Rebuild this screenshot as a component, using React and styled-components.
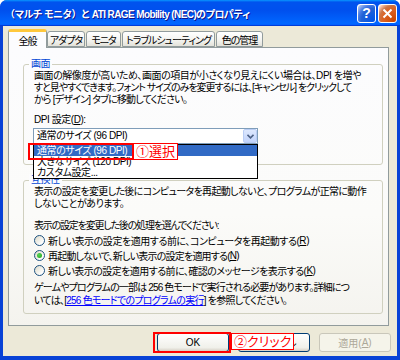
import React from "react";
import styled, { createGlobalStyle } from "styled-components";

const GlobalStyle = createGlobalStyle`
  html, body {
    margin: 0;
    padding: 0;
    background: #fff;
  }
  body {
    font-family: "Liberation Sans", "Noto Sans CJK JP", sans-serif;
    font-size: 10px;
    font-feature-settings: "palt";
  }
`;

const Frame = styled.div`
  width: 400px;
  height: 360px;
  box-sizing: border-box;
  background: #0842d6;
  border-radius: 7px 7px 0 0;
  display: flex;
  flex-direction: column;
  overflow: hidden;
`;

const TitleBar = styled.div`
  height: 26px;
  flex: none;
  display: flex;
  align-items: center;
  padding: 0 3px 0 5px;
  background: linear-gradient(
    180deg,
    #0997ff,
    #0053ee 8%,
    #0050ee 40%,
    #06f 88%,
    #06f 93%,
    #005bff 95%,
    #003dd7 96%,
    #003dd7
  );
  .title {
    flex: 1;
    color: #fff;
    font-weight: bold;
    font-size: 10px;
    font-feature-settings: normal;
    letter-spacing: -0.6px;
    white-space: nowrap;
    text-shadow: 1px 1px #0f1089;
  }
  .jp {
    letter-spacing: -0.8px;
  }
`;

const CaptionButton = styled.div`
  width: 19px;
  height: 19px;
  margin-left: 2px;
  box-sizing: border-box;
  border: 1px solid #fff;
  border-radius: 3px;
  display: flex;
  align-items: center;
  justify-content: center;
  color: #fff;
  font-family: "Liberation Sans", sans-serif;
  font-weight: bold;
  font-size: 14px;
  background: ${(p) =>
    p.$close
      ? "radial-gradient(circle at 90% 90%, #cc4600 0%, #dc6527 55%, #cd7546 70%, #ffccb2 90%, #fff 100%)"
      : "radial-gradient(circle at 90% 90%, #0054e9 0%, #2263d5 55%, #4479e4 70%, #a3bbec 90%, #fff 100%)"};
`;

const Body = styled.div`
  flex: 1;
  margin: 0 3px 4px;
  background: #ece9d8;
  padding: 3px 8px 0 5px;
  display: flex;
  flex-direction: column;
`;

const TabStrip = styled.div`
  height: 18px;
  display: flex;
  align-items: flex-end;
  position: relative;
  z-index: 2;
`;

const Tab = styled.div`
  box-sizing: border-box;
  width: ${(p) => p.$w}px;
  height: ${(p) => (p.$active ? "19px" : "16px")};
  margin-bottom: ${(p) => (p.$active ? "-1px" : "0")};
  margin-right: ${(p) => (p.$active ? "0" : "1px")};
  display: flex;
  align-items: center;
  justify-content: center;
  border: 1px solid #919b9c;
  border-bottom: ${(p) => (p.$active ? "none" : "1px solid #919b9c")};
  border-top: ${(p) => (p.$active ? "3px solid #ffc83c" : "1px solid #919b9c")};
  border-radius: 3px 3px 0 0;
  background: ${(p) =>
    p.$active ? "#fcfcfe" : "linear-gradient(180deg, #fff, #f3f3ef 60%, #e3e2da)"};
  color: #000;
  letter-spacing: -1px;
  white-space: nowrap;
`;

const Panel = styled.div`
  height: 279px;
  box-sizing: border-box;
  border: 1px solid #919b9c;
  background: linear-gradient(180deg, #fcfcfe 0%, #fbfbf9 60%, #f4f3ee 100%);
  padding: 16px 5px 0 14px;
  display: flex;
  flex-direction: column;
  letter-spacing: -0.45px;
`;

const GroupBox = styled.div`
  border: 1px solid #d0d0bf;
  border-radius: 3px;
  padding: 0 10px ${(p) => p.$pb || 0}px 10px;
  margin-top: ${(p) => p.$mt || 0}px;
  display: flex;
  flex-direction: column;
  align-items: flex-start;
`;

const GroupTitle = styled.div`
  margin: -7px 0 0 -5px;
  padding: 0 2px;
  line-height: 12px;
  color: #0046d5;
  background: #fcfcfe;
`;

const Text = styled.div`
  line-height: ${(p) => p.$lh || 12}px;
  margin-top: ${(p) => p.$mt || 0}px;
  letter-spacing: ${(p) => (p.$ls != null ? `${p.$ls}px` : "inherit")};
  white-space: nowrap;
  color: #000;
`;

const Key = styled.span`
  text-decoration: underline;
`;

const Link = styled.span`
  color: #0000ff;
  text-decoration: underline;
`;

const ComboWrap = styled.div`
  position: relative;
  margin: 2px 0 0 -1px;
`;

const Combo = styled.div`
  width: 225px;
  height: 16px;
  box-sizing: border-box;
  border: 1px solid #7f9db9;
  background: #fff;
  display: flex;
  align-items: center;
  padding-left: 3px;
  .value {
    flex: 1;
    line-height: 14px;
  }
`;

const ComboArrow = styled.div`
  width: 14px;
  height: 14px;
  box-sizing: border-box;
  border: 1px solid #b9cdf5;
  border-radius: 2px;
  background: linear-gradient(180deg, #dde8fe, #c1d3fb);
  display: flex;
  align-items: center;
  justify-content: center;
`;

const DropList = styled.div`
  position: absolute;
  top: 16px;
  left: 0;
  width: 225px;
  box-sizing: border-box;
  border: 1px solid #000;
  background: #fff;
  z-index: 3;
`;

const DropItem = styled.div`
  line-height: 11px;
  height: 11px;
  padding-left: 3px;
  background: ${(p) => (p.$selected ? "#316ac5" : "#fff")};
  color: ${(p) => (p.$selected ? "#fff" : "#000")};
  white-space: nowrap;
`;

const RedBox = styled.div`
  position: absolute;
  box-sizing: border-box;
  border: 2px solid #f00;
  z-index: 4;
`;

const RedLabel = styled.div`
  position: absolute;
  box-sizing: border-box;
  border: 1px solid #f00;
  background: #fff;
  color: #f00;
  font-size: 13px;
  letter-spacing: 0;
  line-height: 15px;
  padding: 0 2px;
  white-space: nowrap;
  z-index: 4;
`;

const RadioRow = styled.div`
  height: 15px;
  display: flex;
  align-items: center;
  white-space: nowrap;
  margin-top: ${(p) => p.$mt || 0}px;
  letter-spacing: ${(p) => (p.$ls != null ? `${p.$ls}px` : "inherit")};
`;

const RadioDot = styled.span`
  width: 11px;
  height: 11px;
  box-sizing: border-box;
  border: 1px solid #1c5180;
  border-radius: 50%;
  background: linear-gradient(135deg, #dcd9c8, #fff 80%);
  margin: 0 3px 0 0;
  display: flex;
  align-items: center;
  justify-content: center;
  &::after {
    content: "";
    width: 5px;
    height: 5px;
    border-radius: 50%;
    background: ${(p) => (p.$checked ? "radial-gradient(circle at 35% 35%, #55d551, #21a121)" : "transparent")};
  }
`;

const ButtonRow = styled.div`
  margin: 7px -2px 0 0;
  display: flex;
  justify-content: flex-end;
  gap: 9px;
`;

const ButtonSlot = styled.div`
  position: relative;
`;

const Button = styled.div`
  width: 72px;
  height: 19px;
  box-sizing: border-box;
  border: 1px solid ${(p) => (p.$disabled ? "#c9c7ba" : "#003c74")};
  border-radius: 3px;
  background: ${(p) =>
    p.$disabled ? "#f5f4ea" : "linear-gradient(180deg, #fff, #f0f0ea 80%, #d6d0c5)"};
  color: ${(p) => (p.$disabled ? "#aca899" : "#000")};
  display: flex;
  align-items: center;
  justify-content: center;
`;

function Chevron() {
  return (
    <svg width="7" height="5" viewBox="0 0 7 5">
      <path d="M0.5 0.8 L3.5 3.8 L6.5 0.8" fill="none" stroke="#4d6185" strokeWidth="1.6" />
    </svg>
  );
}

export default function App() {
  return (
    <>
      <GlobalStyle />
      <Frame>
        <TitleBar>
          <span className="title">
            <span className="jp">（マルチ モニタ）と </span>ATI RAGE Mobility (NEC)
            <span className="jp">のプロパティ</span>
          </span>
          <CaptionButton>?</CaptionButton>
          <CaptionButton $close>
            <svg width="11" height="11" viewBox="0 0 11 11">
              <path d="M1.5 1.5 L9.5 9.5 M9.5 1.5 L1.5 9.5" stroke="#fff" strokeWidth="2" />
            </svg>
          </CaptionButton>
        </TitleBar>
        <Body>
          <TabStrip>
            <Tab $active $w={39}>全般</Tab>
            <Tab $w={38}>アダプタ</Tab>
            <Tab $w={35}>モニタ</Tab>
            <Tab $w={93}>トラブルシューティング</Tab>
            <Tab $w={47}>色の管理</Tab>
          </TabStrip>
          <Panel>
            <GroupBox $pb={20}>
              <GroupTitle>画面</GroupTitle>
              <Text>画面の解像度が高いため、画面の項目が小さくなり見えにくい場合は、DPI を増や</Text>
              <Text $ls={-1}>
                すと見やすくできます。フォント サイズのみを変更するには、[キャンセル] をクリックして
              </Text>
              <Text $ls={-0.8}>から [デザイン] タブに移動してください。</Text>
              <Text $mt={8}>
                DPI 設定(<Key>D</Key>):
              </Text>
              <ComboWrap>
                <Combo>
                  <span className="value">通常のサイズ (96 DPI)</span>
                  <ComboArrow>
                    <Chevron />
                  </ComboArrow>
                </Combo>
                <DropList>
                  <DropItem $selected>通常のサイズ (96 DPI)</DropItem>
                  <DropItem>大きなサイズ (120 DPI)</DropItem>
                  <DropItem>カスタム設定...</DropItem>
                </DropList>
                <RedBox style={{ left: -5, top: 15, width: 106, height: 17 }} />
                <RedLabel style={{ left: 100, top: 15, height: 17 }}>①選択</RedLabel>
              </ComboWrap>
            </GroupBox>
            <GroupBox $mt={15} $pb={6}>
              <GroupTitle>互換性</GroupTitle>
              <Text $ls={-0.65}>
                表示の設定を変更した後にコンピュータを再起動しないと、プログラムが正常に動作
              </Text>
              <Text>しないことがあります。</Text>
              <Text $mt={10} $ls={-1.2}>
                表示の設定を変更した後の処理を選んでください:
              </Text>
              <RadioRow $mt={1}>
                <RadioDot />
                新しい表示の設定を適用する前に、コンピュータを再起動する(<Key>R</Key>)
              </RadioRow>
              <RadioRow $ls={-0.8}>
                <RadioDot $checked />
                再起動しないで、新しい表示の設定を適用する(<Key>N</Key>)
              </RadioRow>
              <RadioRow $ls={-0.55}>
                <RadioDot />
                新しい表示の設定を適用する前に、確認のメッセージを表示する(<Key>K</Key>)
              </RadioRow>
              <Text $mt={3} $lh={13} $ls={-0.85}>
                ゲームやプログラムの一部は 256 色モードで実行される必要があります。詳細につ
              </Text>
              <Text $lh={13} $ls={-0.75}>
                いては、[<Link>256 色モードでのプログラムの実行</Link>] を参照してください。
              </Text>
            </GroupBox>
          </Panel>
          <ButtonRow>
            <ButtonSlot>
              <Button>OK</Button>
              <RedBox style={{ left: -4, top: -1, width: 78, height: 21 }} />
              <RedLabel style={{ left: 74, top: 0, height: 17 }}>②クリック</RedLabel>
            </ButtonSlot>
            <Button>キャンセル</Button>
            <Button $disabled>
              適用(<Key>A</Key>)
            </Button>
          </ButtonRow>
        </Body>
      </Frame>
    </>
  );
}
